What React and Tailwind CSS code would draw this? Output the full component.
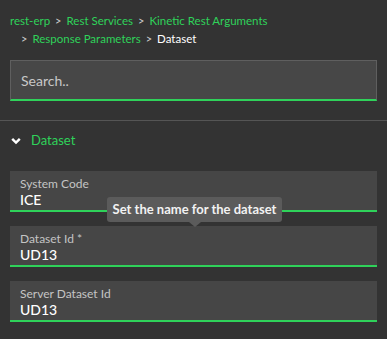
import React from "react";

const G = "text-[#2fd25a]";

function Sep() {
  return <span className="mx-[5px] text-[#cfcfcf] text-[11px]">&gt;</span>;
}

function Field({ label, value }) {
  return (
    <div className="mx-[10px] h-[41px] bg-[#464646] border-b-2 border-[#2fd25a] pl-[10px] pt-[5px] flex flex-col">
      <div className="text-[12px] leading-[15px] text-[#c4c4c4]">{label}</div>
      <div className="text-[14px] leading-[17px] text-white font-medium">{value}</div>
    </div>
  );
}

export default function App() {
  return (
    <div className="relative w-[387px] h-[339px] bg-[#333333] overflow-hidden font-['Lato',sans-serif]">
      <div className="pl-[10px] pt-[12px] text-[11.5px] leading-[18px]">
        <div>
          <span className={G}>rest-erp</span>
          <Sep />
          <span className={G}>Rest Services</span>
          <Sep />
          <span className={G}>Kinetic Rest Arguments</span>
        </div>
        <div className="pl-[6px]">
          <Sep />
          <span className={G}>Response Parameters</span>
          <Sep />
          <span className="text-white">Dataset</span>
        </div>
      </div>
      <div className="mx-[10px] mt-[12px] h-[41px] bg-[#474747] border border-[#5f5f5f] border-b-2 border-b-[#2fd25a] flex items-center pl-[10px]">
        <span className="text-[14px] text-[#c8c8c8]">Search..</span>
      </div>
      <div className="mt-[19px] border-t border-[#555555]" />
      <div className="flex items-center h-[40px] pl-[11px]">
        <svg width="10" height="8" viewBox="0 0 10 8" className="mr-[10px]">
          <path d="M1.2 1.8 L5 5.6 L8.8 1.8" stroke="#ffffff" strokeWidth="2.4" fill="none" />
        </svg>
        <span className={`text-[13px] ${G}`}>Dataset</span>
      </div>
      <div className="mt-[10px] flex flex-col gap-[14px]">
        <Field label="System Code" value="ICE" />
        <Field label="Dataset Id *" value="UD13" />
        <Field label="Server Dataset Id" value="UD13" />
      </div>
      <div className="absolute left-[107px] top-[197px] w-[175px] h-[25px] rounded-[3px] bg-[#5b5b5b] flex items-center justify-center">
        <span className="text-[13px] font-bold text-[#f2f2f2]">Set the name for the dataset</span>
        <div className="absolute left-[82px] top-[25px] w-0 h-0 border-l-[6px] border-r-[6px] border-t-[5px] border-l-transparent border-r-transparent border-t-[#5b5b5b]" />
      </div>
    </div>
  );
}
